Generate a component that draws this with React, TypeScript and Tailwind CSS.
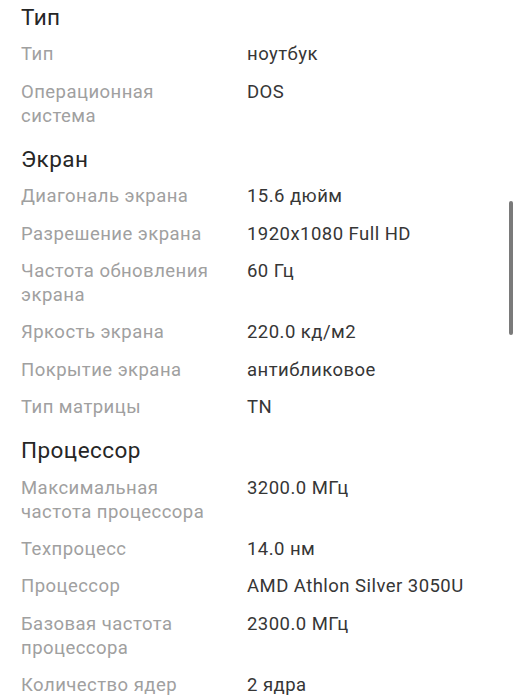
import React from 'react'

type Row = { label: string; value: string }
type Section = { title: string; rows: Row[] }

const SECTIONS: Section[] = [
  {
    title: 'Тип',
    rows: [
      { label: 'Тип', value: 'ноутбук' },
      { label: 'Операционная система', value: 'DOS' },
    ],
  },
  {
    title: 'Экран',
    rows: [
      { label: 'Диагональ экрана', value: '15.6 дюйм' },
      { label: 'Разрешение экрана', value: '1920x1080 Full HD' },
      { label: 'Частота обновления экрана', value: '60 Гц' },
      { label: 'Яркость экрана', value: '220.0 кд/м2' },
      { label: 'Покрытие экрана', value: 'антибликовое' },
      { label: 'Тип матрицы', value: 'TN' },
    ],
  },
  {
    title: 'Процессор',
    rows: [
      { label: 'Максимальная частота процессора', value: '3200.0 МГц' },
      { label: 'Техпроцесс', value: '14.0 нм' },
      { label: 'Процессор', value: 'AMD Athlon Silver 3050U' },
      { label: 'Базовая частота процессора', value: '2300.0 МГц' },
      { label: 'Количество ядер', value: '2 ядра' },
    ],
  },
]

export default function App() {
  return (
    <div className="relative h-[699px] overflow-hidden bg-white font-['Roboto',sans-serif]">
      <div className="flex flex-col gap-[19.5px] pl-[21px] pr-4 pt-[5px]">
        {SECTIONS.map(s => (
          <div key={s.title} className="flex flex-col gap-[13.3px]">
            <h2 className="text-[22.5px] leading-6 tracking-[0.02em] text-[#262626]">{s.title}</h2>
            {s.rows.map(r => (
              <div key={r.label} className="flex text-[18.5px] leading-6 tracking-[0.025em]">
                <div className="w-[226px] shrink-0 pr-6 text-[#a0a0a0]">{r.label}</div>
                <div className="text-[#363636]">{r.value}</div>
              </div>
            ))}
          </div>
        ))}
      </div>
      {/* scrollbar */}
      <div className="absolute left-[509px] top-[201px] h-[134px] w-[4px] rounded-full bg-[#7a7a7a]" />
    </div>
  )
}
